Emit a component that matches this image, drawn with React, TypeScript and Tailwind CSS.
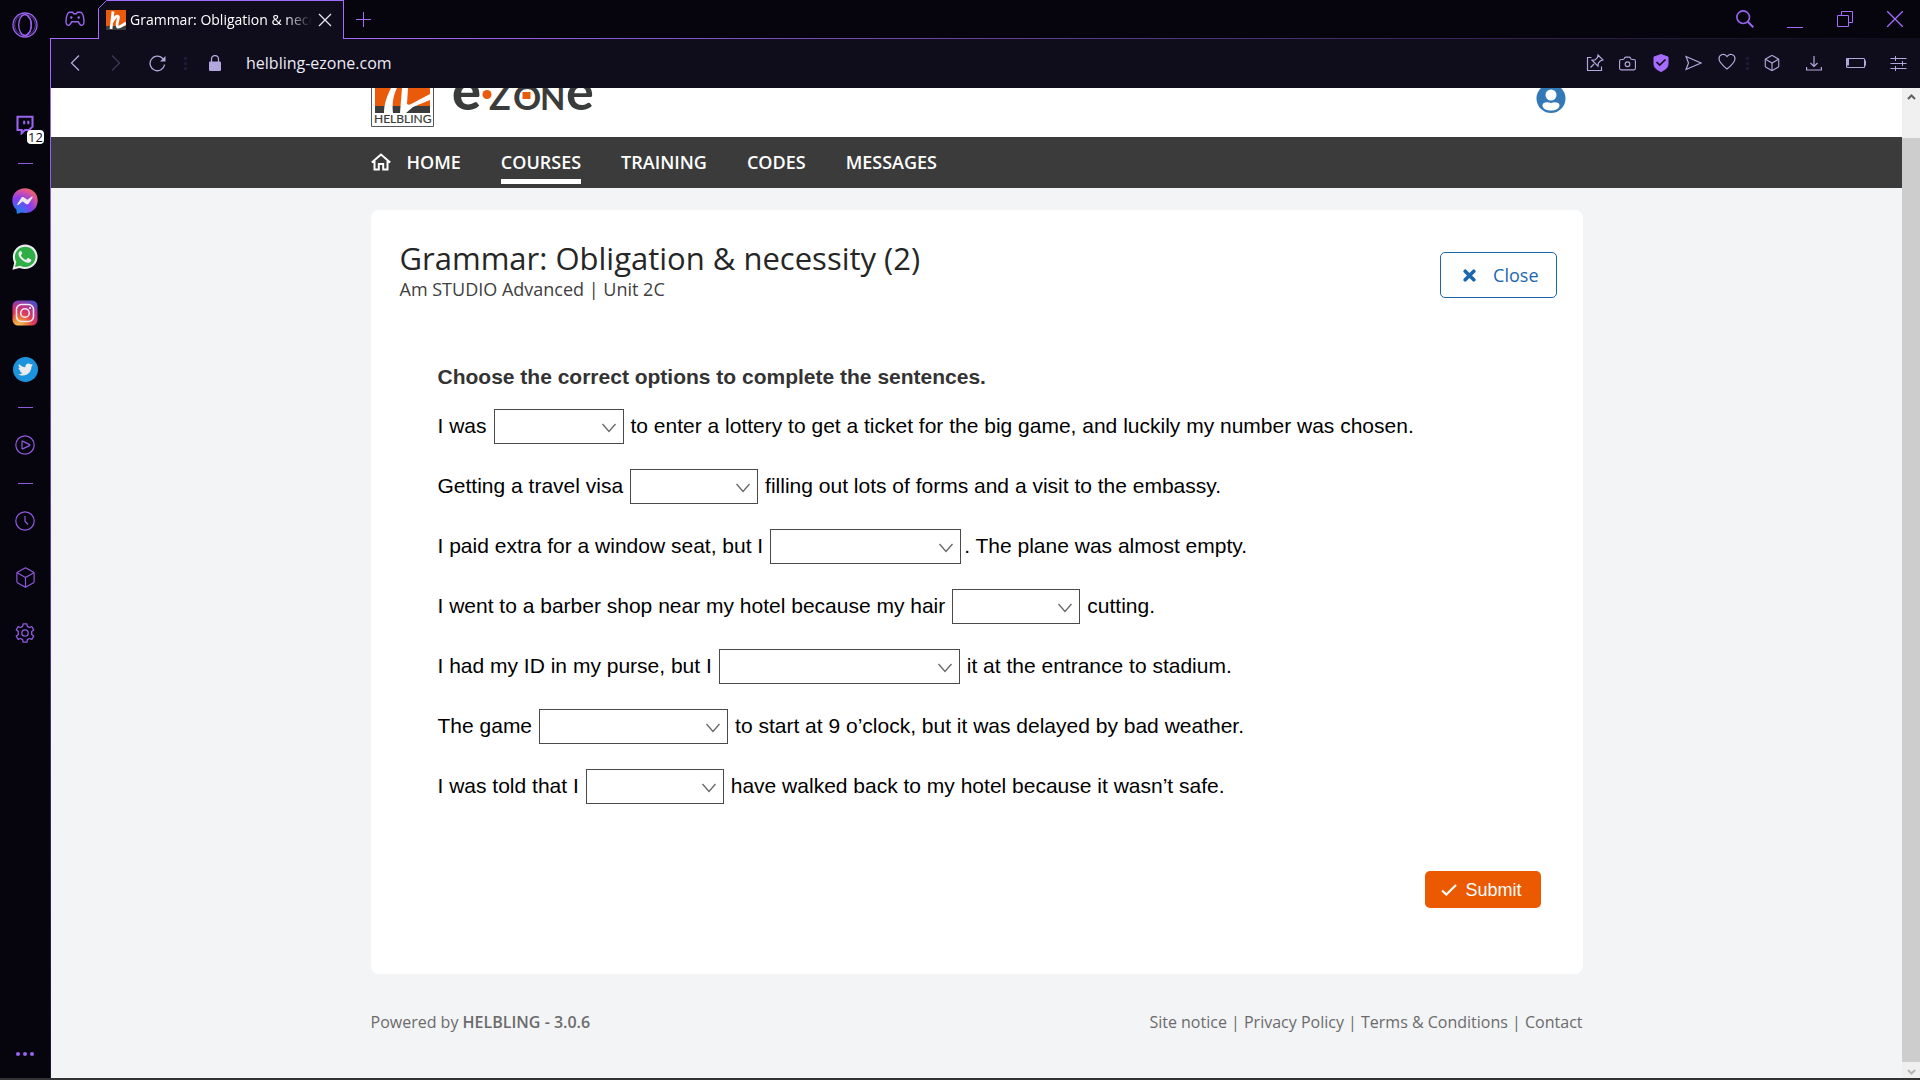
import type { ReactNode } from "react";
import { Box, Camera, Twitch } from "lucide-react";
import { FaTwitter } from "react-icons/fa";

const LINE = "#a66bff";

function OperaIcon() {
  return (
    <svg width="26" height="26" viewBox="0 0 26 26" fill="none" stroke="#9a63f0" strokeWidth="1.3">
      <circle cx="13" cy="13" r="12" />
      <circle cx="13" cy="13" r="10.4" strokeWidth="0.6" />
      <ellipse cx="13" cy="13" rx="6.3" ry="10.4" />
      <path d="M15.5 4.5c5 2 5 15 0 17" />
    </svg>
  );
}

function GamepadIcon() {
  return (
    <svg width="20" height="16" viewBox="0 0 20 16" fill="none" stroke="#9a63f0" strokeWidth="1.4">
      <path d="M5 1.2h2.600l1 1.500h2.800l1-1.500H15c2.200 0 3 2 3.500 5s1.100 5.500-.2 7.200-3.100.9-3.900-.8L13.300 10.800H6.700L5.600 12.600c-.8 1.700-2.600 2.500-3.900.8S1 9.200 1.500 6.200 2.800 1.200 5 1.200z" />
      <circle cx="6.300" cy="6.500" r="1.200" fill="#9a63f0" stroke="none" />
      <circle cx="13.700" cy="6.500" r="1.200" fill="#9a63f0" stroke="none" />
    </svg>
  );
}

function MessengerIcon() {
  return (
    <svg width="26" height="26" viewBox="0 0 26 26">
      <defs>
        <radialGradient id="messenger" cx="0.2" cy="1" r="1.1">
          <stop offset="0" stopColor="#0a8cf0" />
          <stop offset="0.55" stopColor="#8a3bee" />
          <stop offset="0.85" stopColor="#d9559a" />
          <stop offset="1" stopColor="#ef6560" />
        </radialGradient>
      </defs>
      <path d="M13 .3C5.800.3.3 5.500.3 12.500c0 3.700 1.500 6.900 4 9.100.4.400.3 4 .9 4.300.5.2 3.300-1.400 3.900-1.300 1.200.3 2.500.500 3.900.500 7.200 0 12.700-5.400 12.700-12.600S20.200.3 13 .3z" fill="url(#messenger)" />
      <path d="M5.300 16.200 9.200 10c.6-1 1.900-1.200 2.800-.5l2.900 2.100c.3.200.6.200.9 0l4-3c.500-.4 1.200.2.800.8l-3.800 6c-.6 1-1.900 1.200-2.800.500l-2.900-2.200c-.3-.2-.6-.2-.9 0l-4 3.200c-.6.400-1.300-.2-.9-.7z" fill="#ececf0" />
    </svg>
  );
}

function WhatsappIcon() {
  return (
    <svg width="26" height="26" viewBox="0 0 26 26">
      <path d="M.4 25.700 2.200 19C-1.900 10.500 3.700.5 13.200.5c7 0 12.400 5.600 12.400 12.300 0 9-9.300 14.700-18 11.100z" fill="#ececf0" />
      <path d="M3 23l1.300-4.900C.4 11 5.300 2.700 13.200 2.700c5.700 0 10.300 4.500 10.300 10.100 0 7.600-8.100 12.600-15.300 9z" fill="#2fae45" />
      <path d="M9.300 7.300c-.3-.6-1.300-.5-1.800.1-2.400 2.700-.3 6.200 2.600 8.600 2.800 2.400 6.700 4 8.700 1.500.5-.6.800-1.700.2-2l-2.700-1.400c-.4-.2-.7 0-1 .4l-.9 1.100c-.3.300-.6.300-1 .100-2-.9-3.300-2.200-4.300-3.900-.2-.4-.2-.6.100-.9l.8-1c.2-.2.200-.5.100-.8z" fill="#ececf0" />
    </svg>
  );
}

function InstagramIcon() {
  return (
    <svg width="26" height="26" viewBox="0 0 26 26" fill="none">
      <defs>
        <radialGradient id="insta" cx="0.25" cy="1.05" r="1.15">
          <stop offset="0" stopColor="#f2cf63" />
          <stop offset="0.25" stopColor="#ee8a3c" />
          <stop offset="0.5" stopColor="#df3b57" />
          <stop offset="0.75" stopColor="#b8338f" />
          <stop offset="1" stopColor="#4b50c8" />
        </radialGradient>
      </defs>
      <rect x="0.5" y="0.5" width="25" height="25" rx="5.500" fill="url(#insta)" />
      <rect x="4.500" y="4.500" width="17" height="17" rx="5" stroke="#ececf0" strokeWidth="1.600" />
      <circle cx="13" cy="13" r="4.300" stroke="#ececf0" strokeWidth="1.600" />
      <circle cx="18" cy="8" r="1.100" fill="#ececf0" />
    </svg>
  );
}

function PlayIcon() {
  return (
    <svg width="20" height="20" viewBox="0 0 20 20" fill="none" stroke="#9159e0" strokeWidth="1.200">
      <circle cx="10" cy="10" r="9.200" />
      <path d="M7 6.500v7c0 .4.300.5.600.4l7-3.300c.4-.2.400-.8 0-1L7.600 6.100c-.3-.1-.6 0-.6.400z" strokeLinejoin="round" />
    </svg>
  );
}

function GearIcon() {
  return (
    <svg width="20" height="20" viewBox="0 0 20 20" fill="none" stroke="#9159e0" strokeWidth="1.300" strokeLinejoin="round">
      <circle cx="10" cy="10" r="3.200" />
      <path d="M8.100.8h3.800l.5 2.600 1.900 1.100 2.500-.9 1.900 3.300-2 1.700v2.800l2 1.700-1.900 3.300-2.500-.9-1.900 1.100-.5 2.600H8.100l-.5-2.600-1.900-1.100-2.500.9-1.900-3.300 2-1.700V8.600l-2-1.700 1.900-3.300 2.500.9 1.900-1.100z" />
    </svg>
  );
}

function SideItem({ label, children }: { label: string; children: ReactNode }) {
  return (
    <button aria-label={label} className="grid h-14 w-full shrink-0 place-items-center">
      {children}
    </button>
  );
}

function Dash() {
  return (
    <div className="grid h-5 w-full shrink-0 place-items-center">
      <div className="h-px w-[15px] bg-[#9159e0]" />
    </div>
  );
}

function Sidebar() {
  return (
    <aside className="flex w-[51px] shrink-0 bg-[#06040d]">
      <div className="flex min-w-0 flex-1 flex-col items-center">
        <button aria-label="Opera menu" className="grid h-[50px] w-full shrink-0 place-items-center">
          <OperaIcon />
        </button>
        <button aria-label="Twitch" className="relative mt-[47px] grid h-14 w-full shrink-0 place-items-center">
          <Twitch size={20} strokeWidth={2.5} color="#9a63f0" strokeLinecap="butt" strokeLinejoin="miter" />
          <span className="absolute top-[33px] left-[27px] rounded-sm bg-white px-px font-['Open_Sans'] text-[13px] leading-[14px] text-[#15101f]">
            12
          </span>
        </button>
        <Dash />
        <SideItem label="Messenger"><MessengerIcon /></SideItem>
        <SideItem label="WhatsApp"><WhatsappIcon /></SideItem>
        <SideItem label="Instagram"><InstagramIcon /></SideItem>
        <SideItem label="Twitter">
          <span className="grid size-[25px] place-items-center rounded-full bg-[#1c93dd]">
            <FaTwitter size={15} color="#ececf0" />
          </span>
        </SideItem>
        <Dash />
        <SideItem label="Player"><PlayIcon /></SideItem>
        <Dash />
        <SideItem label="History">
          <svg width="20" height="20" viewBox="0 0 20 20" fill="none" stroke="#9159e0" strokeWidth="1.200">
            <circle cx="10" cy="10" r="9.200" />
            <path d="M10 5v5.200l3 3.300" />
          </svg>
        </SideItem>
        <SideItem label="Extensions"><Box size={23} strokeWidth={1.2} color="#9159e0" /></SideItem>
        <SideItem label="Settings"><GearIcon /></SideItem>
        <button aria-label="More" className="mt-auto mb-[18px] flex gap-[3px] py-1">
          <span className="size-1 rounded-full bg-[#9a63f0]" />
          <span className="size-1 rounded-full bg-[#9a63f0]" />
          <span className="size-1 rounded-full bg-[#9a63f0]" />
        </button>
      </div>
      <div className="mt-[38px] w-px bg-linear-to-b from-[#a66bff] to-[#1b1330]" />
    </aside>
  );
}

function WinButton({ label, children }: { label: string; children: ReactNode }) {
  return (
    <button aria-label={label} className="grid h-full w-[50px] place-items-center">
      {children}
    </button>
  );
}

function Favicon() {
  return (
    <svg width="20" height="20" viewBox="0 0 20 20" className="shrink-0">
      <path d="M0 0h20v20H0z" fill="#ea5a0b" />
      <path d="M0 16h20v4H0z" fill="#3a3c3b" />
      <path d="M7 1.500 5 19M6 12c2-4 5-7 6.200-5.600S9.600 15 11.600 17c1.600 1 5-1.800 8.400-4" fill="none" stroke="#fff" strokeWidth="2.800" />
    </svg>
  );
}

function TabBar() {
  return (
    <div className="flex h-[39px] shrink-0 bg-[#06040d]">
      <button aria-label="GX Corner" className="grid w-[47px] place-items-center border-b border-[#a66bff]">
        <GamepadIcon />
      </button>
      <div className="relative flex w-[246px] items-center border-x border-t border-[#a66bff] bg-[#0f0c1b] pr-[11px] pl-[7px]">
        <svg width="9" height="9" viewBox="0 0 9 9" className="absolute -top-px -left-px">
          <path d="M0 0h9L0 9z" fill="#06040d" />
          <path d="M.5 8.500l8-8" stroke={LINE} />
        </svg>
        <Favicon />
        <span className="ml-1 w-[182px] overflow-hidden mask-r-from-85% font-['Open_Sans'] text-[14px] leading-6 whitespace-nowrap text-white">
          Grammar: Obligation &amp; necessity (2)
        </span>
        <button aria-label="Close tab" className="ml-auto">
          <svg width="14" height="14" viewBox="0 0 14 14" stroke="#e8e6f0" strokeWidth="1.300">
            <path d="M1 1l12 12M13 1L1 13" />
          </svg>
        </button>
      </div>
      <div className="flex flex-1 flex-col">
        <div className="flex flex-1 items-center justify-between">
          <button aria-label="New tab" className="ml-3">
            <svg width="15" height="15" viewBox="0 0 15 15" stroke={LINE}>
              <path d="M7.500 0v15M0 7.500h15" />
            </svg>
          </button>
          <div className="flex h-full">
            <WinButton label="Search tabs">
              <svg width="18" height="18" viewBox="0 0 18 18" fill="none" stroke="#9a63f0">
                <circle cx="7.200" cy="7.200" r="6.300" strokeWidth="1.600" />
                <path d="M11.800 11.800l5.500 5.500" strokeWidth="2" />
              </svg>
            </WinButton>
            <WinButton label="Minimize"><span className="mt-4 h-px w-4 bg-[#a66bff]" /></WinButton>
            <WinButton label="Restore">
              <svg width="16" height="16" viewBox="0 0 16 16" fill="none" stroke={LINE}>
                <path d="M.5 4.500h11v11H.5zM4.500 4.500v-4h11v11h-4" />
              </svg>
            </WinButton>
            <WinButton label="Close window">
              <svg width="16" height="16" viewBox="0 0 16 16" stroke={LINE} strokeWidth="1.300">
                <path d="M0 0l16 16M16 0L0 16" />
              </svg>
            </WinButton>
          </div>
        </div>
        <div className="h-px bg-linear-to-r from-[#a66bff] to-[#0f0c1b]" />
      </div>
    </div>
  );
}

function Tool({ label, wide, children }: { label: string; wide?: boolean; children: ReactNode }) {
  return (
    <button aria-label={label} className={wide ? "grid w-[42px] place-items-center" : "grid w-[33px] place-items-center"}>
      {children}
    </button>
  );
}

function Grip() {
  return (
    <span className="flex w-2 flex-col items-center gap-[2px]">
      <span className="size-[3px] bg-[#1e1838]" />
      <span className="size-[3px] bg-[#1e1838]" />
      <span className="size-[3px] bg-[#1e1838]" />
    </span>
  );
}

const ink = "#b3a8dd";

function AddressBar() {
  return (
    <div className="flex h-[49px] shrink-0 items-center bg-[#0f0c1b] pr-px pb-px">
      <button aria-label="Back" className="grid w-[47px] place-items-center">
        <svg width="10" height="16" viewBox="0 0 10 16" fill="none" stroke={ink} strokeWidth="1.300">
          <path d="M9 .5L1.500 8 9 15.500" />
        </svg>
      </button>
      <button aria-label="Forward" disabled className="grid w-[35px] place-items-center">
        <svg width="10" height="16" viewBox="0 0 10 16" fill="none" stroke="#3e3857" strokeWidth="1.300">
          <path d="M1 .5L8.500 8 1 15.500" />
        </svg>
      </button>
      <button aria-label="Reload" className="grid w-[48px] place-items-center">
        <svg width="17" height="17" viewBox="0 0 17 17" fill="none" stroke={ink} strokeWidth="1.300">
          <path d="M15.600 9.500A7.300 7.300 0 1 1 13.500 3.200l2 2" />
          <path d="M16.500 1v5.500H11z" fill={ink} stroke="none" />
        </svg>
      </button>
      <Grip />
      <button aria-label="Site information" className="ml-5">
        <svg width="12" height="16" viewBox="0 0 12 16" fill="none">
          <path d="M2.500 8V4a3.500 3.500 0 0 1 7 0v4" stroke={ink} strokeWidth="1.300" />
          <rect y="6.500" width="12" height="9.500" rx="1.200" fill={ink} />
        </svg>
      </button>
      <input
        aria-label="Address"
        defaultValue="helbling-ezone.com"
        className="ml-[25px] min-w-0 flex-1 bg-transparent font-['Open_Sans'] text-[16px] leading-6 text-[#eceaf5] outline-none"
      />
      <Tool label="Pin page">
        <svg width="18" height="18" viewBox="0 0 18 18" fill="none" stroke={ink} strokeWidth="1.200">
          <path d="M5.500 3.500H1.500v13h14v-4M4.500 13.500L8 10M12 1l5 5-2.500.8-2.200 2.400-.3 3-6-6 3-.3 2.400-2.200z" />
        </svg>
      </Tool>
      <Tool label="Snapshot">
        <Camera size={19} strokeWidth={1.4} color={ink} />
      </Tool>
      <Tool label="Ad blocker">
        <svg width="16" height="18" viewBox="0 0 16 18" fill="none">
          <path d="M8 .5L15 3v7c0 4-3.500 6-7 7.500C4.500 16 1 14 1 10V3z" fill={LINE} stroke={LINE} />
          <path d="M3.500 8l3.200 3L12.500 5.500" stroke="#0f0c1b" strokeWidth="1.700" />
        </svg>
      </Tool>
      <Tool label="Send to My Flow">
        <svg width="17" height="16" viewBox="0 0 17 16" fill="none" stroke={ink} strokeWidth="1.200">
          <path d="M1 1.500L16 8 1 14.500 3.500 8z" />
        </svg>
      </Tool>
      <Tool label="Bookmark">
        <svg width="18" height="17" viewBox="0 0 18 17" fill="none" stroke={ink} strokeWidth="1.200" className="mb-1">
          <path d="M9 16C4 12 1 9 1 5.500 1 1.500 6.500-.5 9 3.500 11.500-.5 17 1.500 17 5.500 17 9 14 12 9 16z" />
        </svg>
      </Tool>
      <Grip />
      <Tool label="Extensions" wide>
        <Box size={18} strokeWidth={1.5} color={ink} />
      </Tool>
      <Tool label="Downloads" wide>
        <svg width="16" height="16" viewBox="0 0 16 16" fill="none" stroke={ink} strokeWidth="1.200">
          <path d="M8 1v10M4.500 8L8 11.500 11.500 8M.6 12v3h14.800v-3" />
        </svg>
      </Tool>
      <Tool label="Battery saver" wide>
        <svg width="22" height="12" viewBox="0 0 22 12" fill="none" stroke={ink} strokeWidth="1.200">
          <rect x="1.600" y="1.500" width="18" height="9" rx="1" />
          <path d="M1 1.500h3v7H1zM20 3.500h1v5h-1z" fill={ink} stroke="none" />
        </svg>
      </Tool>
      <Tool label="Easy setup" wide>
        <svg width="17" height="16" viewBox="0 0 17 16" fill="none" stroke={ink}>
          <path d="M.5 3.500h16M.5 8.500h16M.5 13.500h16M5.500 1v5M12.500 6v5M5.500 11v5" />
        </svg>
      </Tool>
    </div>
  );
}

function Brand() {
  return (
    <a href="#home" aria-label="Helbling e-zone" className="block h-full">
      <svg width="226" height="49" viewBox="0 0 226 49">
        <path d="M.5 0v38.500h62V0" fill="#fff" stroke="#55585a" />
        <path d="M4 0h55v18H4z" fill="#ea5a0b" />
        <path d="M4 18h55v7H4z" fill="#3a3c3b" />
        <path d="M20 0h6c-4 8-5 16-4 25h-9c0-9 3-17 7-25zM31 0h6l-1 16q2 2 6-1L59 6v6L42 19l-7 6h-6z" fill="#fff" />
        <text x="3" y="35" fontFamily="Lato" fontSize="12" fill="#3a3c3b" stroke="#3a3c3b" strokeWidth="0.2">HELBLING</text>
        <g fontFamily="Lato" fontWeight="700" fill="#3a3c3b">
          <text x="81" y="22" fontSize="54" fontWeight="900">e</text>
          <text x="118" y="22" fontSize="36">Z</text>
          <text x="142" y="22" fontSize="35">O</text>
          <text x="169" y="22" fontSize="33">N</text>
          <text x="195" y="22" fontSize="52">e</text>
        </g>
        <path d="M151.500 4h8v7h-8z" fill="#ea5a0b" />
        <circle cx="116" cy="6.500" r="4.500" fill="#ea5a0b" />
      </svg>
    </a>
  );
}

function Header() {
  return (
    <header>
      <div className="h-[49px] overflow-hidden bg-white">
        <div className="mx-auto flex h-full w-full max-w-[1212px] items-start justify-between pr-[17px]">
          <Brand />
          <button aria-label="Account">
            <svg width="30" height="26" viewBox="0 0 30 26">
              <circle cx="15" cy="10.500" r="14.500" fill="#3379b7" />
              <circle cx="15" cy="7" r="5.500" fill="#fff" />
              <path d="M6.500 17.500c0-3 4-4 8.500-2.500 4.500-1.500 8.500-.5 8.500 2.500s-4 5-8.500 5-8.500-2-8.500-5z" fill="#fff" />
            </svg>
          </button>
        </div>
      </div>
      <nav className="bg-[#3a3b3a] font-['Open_Sans'] text-[18px] font-semibold text-white">
        <div className="mx-auto flex h-[51px] w-full max-w-[1212px] gap-10">
          <a href="#home" className="flex h-[47px] items-center gap-4 border-b-[5px] border-transparent pt-2">
            <svg width="20" height="18" viewBox="0 0 20 18" fill="none" stroke="#fff" strokeWidth="2">
              <path d="M.8 9.500L10 1.500l9.200 8M3.500 8v8.500h4.300V11h4.400v5.500h4.300V8" />
            </svg>
            HOME
          </a>
          <a href="#courses" className="flex h-[47px] items-center border-b-[5px] border-white pt-2">COURSES</a>
          <a href="#training" className="flex h-[47px] items-center border-b-[5px] border-transparent pt-2">TRAINING</a>
          <a href="#codes" className="flex h-[47px] items-center border-b-[5px] border-transparent pt-2">CODES</a>
          <a href="#messages" className="flex h-[47px] items-center border-b-[5px] border-transparent pt-2">MESSAGES</a>
        </div>
      </nav>
    </header>
  );
}

function Gap({ label, width }: { label: string; width: string }) {
  return (
    <span className={`relative mx-[7px] inline-flex shrink-0 ${width}`}>
      <select aria-label={label} className="h-[35px] w-full appearance-none border border-[#4a4a4a] bg-white outline-none" />
      <svg width="14" height="10" viewBox="0 0 14 10" fill="none" stroke="#666" strokeWidth="1.300" className="pointer-events-none absolute top-[14px] right-[8px]">
        <path d="M.5 1L7 8.500 13.500 1" />
      </svg>
    </span>
  );
}

const questions = [
  { before: "I was", width: "w-[130px]", after: "to enter a lottery to get a ticket for the big game, and luckily my number was chosen." },
  { before: "Getting a travel visa", width: "w-[128px]", after: "filling out lots of forms and a visit to the embassy." },
  { before: "I paid extra for a window seat, but I", width: "w-[191px]", after: ". The plane was almost empty." },
  { before: "I went to a barber shop near my hotel because my hair", width: "w-[128px]", after: "cutting." },
  { before: "I had my ID in my purse, but I", width: "w-[241px]", after: "it at the entrance to stadium." },
  { before: "The game", width: "w-[189px]", after: "to start at 9 o’clock, but it was delayed by bad weather." },
  { before: "I was told that I", width: "w-[138px]", after: "have walked back to my hotel because it wasn’t safe." },
];

function Exercise() {
  return (
    <main className="mx-auto mt-[22px] flex w-full max-w-[1212px] flex-col rounded-lg bg-white pr-[26px] pb-[66px] pl-[29px]">
      <div className="flex items-start justify-between pt-[29px] font-['Open_Sans']">
        <div>
          <h1 className="text-[31px] leading-[38px] text-[#262626]">Grammar: Obligation &amp; necessity (2)</h1>
          <p className="text-[18px] leading-6 text-[#404040]">Am STUDIO Advanced | Unit 2C</p>
        </div>
        <button className="mt-[13px] flex h-[46px] items-center gap-[17px] rounded-[5px] border border-[#1b66ad] pr-[17px] pl-[22px] text-[18px] text-[#1b66ad]">
          <svg width="13" height="13" viewBox="0 0 13 13" stroke="#1b66ad" strokeWidth="3.600" strokeLinecap="round">
            <path d="M2.200 2.200l8.600 8.600M10.800 2.200L2.200 10.800" />
          </svg>
          Close
        </button>
      </div>
      <form className="mt-16 flex flex-col pl-[38px] font-['Liberation_Sans'] text-[21px] leading-6 text-black" onSubmit={(e) => e.preventDefault()}>
        <h2 className="mb-[7px] font-bold text-[#333]">Choose the correct options to complete the sentences.</h2>
        {questions.map((q, i) => (
          <p key={q.before} className="flex h-[60px] items-center">
            {q.before}
            <Gap label={`Answer ${i + 1}`} width={q.width} />
            <span className={q.after.startsWith(".") ? "-ml-1" : ""}>{q.after}</span>
          </p>
        ))}
        <button type="submit" className="mt-[55px] mr-4 flex h-[37px] items-center gap-2 self-end rounded-[5px] bg-[#eb5a00] pr-[19px] pl-4 text-[18px] text-white">
          <svg width="16" height="12" viewBox="0 0 16 12" fill="none" stroke="#fff" strokeWidth="2.200">
            <path d="M1 6.500L5.300 10.500 15 1" />
          </svg>
          Submit
        </button>
      </form>
    </main>
  );
}

function Footer() {
  return (
    <footer className="mx-auto mt-9 flex w-full max-w-[1212px] justify-between font-['Open_Sans'] text-[16px] leading-6 text-[#6b6b6b]">
      <p>Powered by <b className="font-semibold">HELBLING - 3.0.6</b></p>
      <p>
        <a href="#site">Site notice</a> | <a href="#privacy">Privacy Policy</a> | <a href="#terms">Terms &amp; Conditions</a> | <a href="#contact">Contact</a>
      </p>
    </footer>
  );
}

function Scrollbar() {
  return (
    <div className="flex w-[18px] shrink-0 flex-col bg-[#f0f0f0]">
      <svg width="18" height="18" viewBox="0 0 18 18" fill="none" stroke="#606060" strokeWidth="2">
        <path d="M6 11l3.500-3.500L13 11" />
      </svg>
      <div className="mt-8 flex-1 bg-[#cdcdcd]" />
      <svg width="18" height="16" viewBox="0 0 18 16" fill="none" stroke="#b5b5b5" strokeWidth="2">
        <path d="M6 8l3.500 3.500L13 8" />
      </svg>
    </div>
  );
}

export default function App() {
  return (
    <div className="flex h-screen flex-col overflow-hidden border-b-2 border-[#333234]">
      <div className="flex min-h-0 flex-1">
        <Sidebar />
        <div className="flex min-w-0 flex-1 flex-col">
          <TabBar />
          <AddressBar />
          <div className="flex min-h-0 flex-1">
            <div className="min-w-0 flex-1 overflow-hidden bg-[#f3f4f6]">
              <Header />
              <Exercise />
              <Footer />
            </div>
            <Scrollbar />
          </div>
        </div>
      </div>
    </div>
  );
}
